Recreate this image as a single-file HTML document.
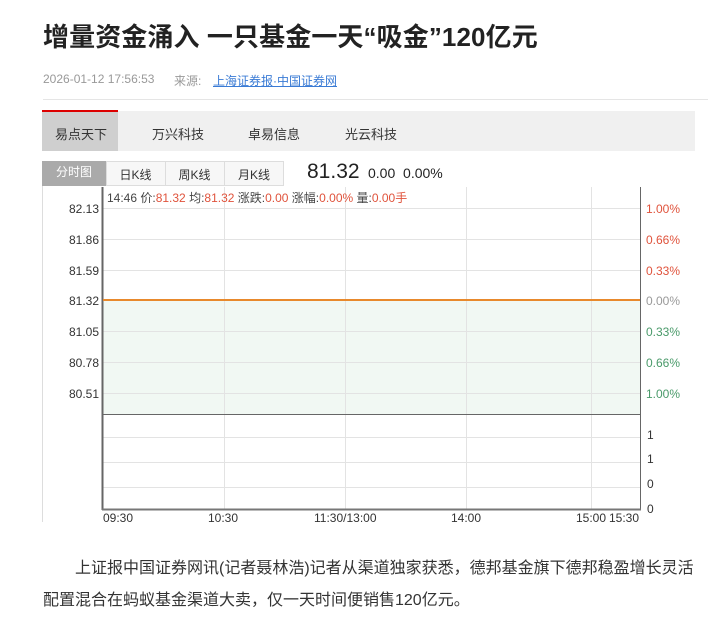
<!DOCTYPE html>
<html><head><meta charset="utf-8"><style>
body{margin:0;background:#fff;font-family:"Liberation Sans","Noto Sans CJK SC",sans-serif;width:719px;height:623px;overflow:hidden;position:relative}
.a{position:absolute;white-space:nowrap}
</style></head><body>
<div class="a" style="left:43px;top:17px;font-size:26px;font-weight:bold;color:#222;letter-spacing:0.1px">增量资金涌入 一只基金一天“吸金”120亿元</div>
<div class="a" style="left:43px;top:72px;font-size:12px;color:#999">2026-01-12 17:56:53</div>
<div class="a" style="left:174px;top:72px;font-size:12px;color:#999">来源:</div>
<div class="a" style="left:213px;top:72px;font-size:12px;color:#3a7bd5;text-decoration:underline">上海证券报·中国证券网</div>
<div class="a" style="left:43px;top:99px;width:665px;height:1px;background:#e5e5e5"></div>
<div class="a" style="left:42px;top:111px;width:653px;height:40px;background:#f0f0f0"></div>
<div class="a" style="left:42px;top:110px;width:76px;height:41px;background:#cfcfcf;border-top:2px solid #d00;box-sizing:border-box"></div>
<div class="a" style="left:55px;top:124px;font-size:13px;color:#333">易点天下</div>
<div class="a" style="left:152px;top:124px;font-size:13px;color:#333">万兴科技</div>
<div class="a" style="left:248px;top:124px;font-size:13px;color:#333">卓易信息</div>
<div class="a" style="left:345px;top:124px;font-size:13px;color:#333">光云科技</div>
<div class="a" style="left:42px;top:161px;width:64px;height:25px;background:#aaa;color:#fff;font-size:12px;line-height:23px;text-align:center">分时图</div>
<div class="a" style="left:106px;top:161px;width:178px;height:25px;border:1px solid #ddd;box-sizing:border-box;background:#f7f7f7"></div>
<div class="a" style="left:165px;top:161px;width:1px;height:25px;background:#ddd"></div>
<div class="a" style="left:224px;top:161px;width:1px;height:25px;background:#ddd"></div>
<div class="a" style="left:106px;top:166px;width:59px;text-align:center;font-size:12px;color:#333">日K线</div>
<div class="a" style="left:165px;top:166px;width:59px;text-align:center;font-size:12px;color:#333">周K线</div>
<div class="a" style="left:224px;top:166px;width:60px;text-align:center;font-size:12px;color:#333">月K线</div>
<div class="a" style="left:307px;top:160px;font-size:21px;color:#222">81.32</div>
<div class="a" style="left:368px;top:165px;font-size:14px;color:#222">0.00 &nbsp;0.00%</div>
<svg class="a" style="left:0;top:0" width="719" height="623" font-family="Liberation Sans, Noto Sans CJK SC, sans-serif" font-size="12">
<line x1="42.5" y1="186" x2="42.5" y2="522" stroke="#ddd"/>
<rect x="103" y="300" width="537" height="114" fill="#f1f8f3"/>
<g stroke="#e3e3e3">
<line x1="103" y1="208.5" x2="640" y2="208.5"/><line x1="103" y1="239.5" x2="640" y2="239.5"/><line x1="103" y1="270.5" x2="640" y2="270.5"/>
<line x1="103" y1="331.5" x2="640" y2="331.5"/><line x1="103" y1="362.5" x2="640" y2="362.5"/><line x1="103" y1="393.5" x2="640" y2="393.5"/>
<line x1="103" y1="437.5" x2="640" y2="437.5"/><line x1="103" y1="462.5" x2="640" y2="462.5"/><line x1="103" y1="487.5" x2="640" y2="487.5"/>
<line x1="224.5" y1="187" x2="224.5" y2="509"/><line x1="345.5" y1="187" x2="345.5" y2="509"/><line x1="466.5" y1="187" x2="466.5" y2="509"/><line x1="591.5" y1="187" x2="591.5" y2="509"/>
</g>
<line x1="103" y1="414.5" x2="640" y2="414.5" stroke="#666"/>
<line x1="102.5" y1="187" x2="102.5" y2="510" stroke="#666" stroke-width="2"/>
<line x1="640.5" y1="187" x2="640.5" y2="510" stroke="#666"/>
<line x1="102" y1="509.5" x2="641" y2="509.5" stroke="#777" stroke-width="2"/>
<line x1="103" y1="300" x2="640" y2="300" stroke="#e8892c" stroke-width="2"/>
<g fill="#333" text-anchor="end">
<text x="99" y="213">82.13</text><text x="99" y="244">81.86</text><text x="99" y="275">81.59</text><text x="99" y="305">81.32</text><text x="99" y="336">81.05</text><text x="99" y="367">80.78</text><text x="99" y="398">80.51</text>
</g>
<g font-size="12">
<text x="646" y="213" fill="#e0533c">1.00%</text><text x="646" y="244" fill="#e0533c">0.66%</text><text x="646" y="275" fill="#e0533c">0.33%</text>
<text x="646" y="305" fill="#999">0.00%</text>
<text x="646" y="336" fill="#4a9a6a">0.33%</text><text x="646" y="367" fill="#4a9a6a">0.66%</text><text x="646" y="398" fill="#4a9a6a">1.00%</text>
<text x="647" y="439" fill="#333">1</text><text x="647" y="463" fill="#333">1</text><text x="647" y="488" fill="#333">0</text><text x="647" y="513" fill="#333">0</text>
</g>
<g fill="#333">
<text x="103" y="522">09:30</text><text x="208" y="522">10:30</text><text x="314" y="522">11:30/13:00</text><text x="451" y="522">14:00</text><text x="576" y="522">15:00</text><text x="609" y="522">15:30</text>
</g>
<text x="107" y="202" font-size="12" fill="#444">14:46 价:<tspan fill="#e0533c">81.32</tspan> 均:<tspan fill="#e0533c">81.32</tspan> 涨跌:<tspan fill="#e0533c">0.00</tspan> 涨幅:<tspan fill="#e0533c">0.00%</tspan> 量:<tspan fill="#e0533c">0.00手</tspan></text>
</svg>
<div class="a" style="left:43px;top:553px;font-size:16px;color:#333;line-height:32px;white-space:normal;width:660px;text-indent:32px">上证报中国证券网讯(记者聂林浩)记者从渠道独家获悉，德邦基金旗下德邦稳盈增长灵活配置混合在蚂蚁基金渠道大卖，仅一天时间便销售120亿元。</div>
</body></html>
